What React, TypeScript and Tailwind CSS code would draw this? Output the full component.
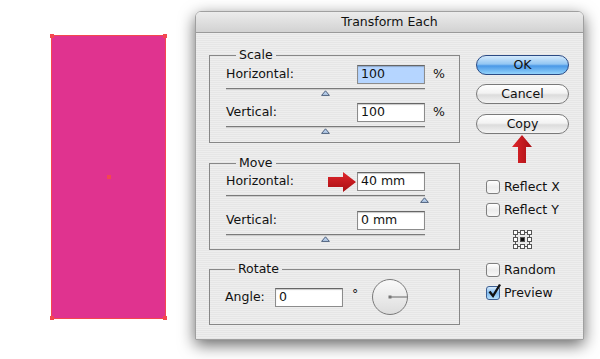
const STRIPES =
  'bg-[repeating-linear-gradient(to_bottom,#eeeeee_0px,#eeeeee_1px,#e6e6e6_1px,#e6e6e6_2px)]'
const AQUA =
  'border border-[#7a7a7a] bg-[linear-gradient(to_bottom,#ffffff_0%,#f3f3f3_45%,#dcdcdc_55%,#f4f4f4_100%)]'
const AQUA_BLUE =
  'border border-[#2b4a84] bg-[linear-gradient(to_bottom,#d3e9fc_0%,#92c6f3_45%,#4a98e7_55%,#93d3fb_100%)]'

function Field({ value, selected, w = 'w-[68px]' }: { value: string; selected?: boolean; w?: string }) {
  return (
    <div
      className={`flex h-[19px] ${w} items-center border border-[#8c8c8c] border-t-[#666] pl-[3px] shadow-[inset_0_1px_1px_rgba(0,0,0,0.22)] ${
        selected ? 'bg-[#b5d5ff]' : 'bg-white'
      }`}
    >
      {value}
    </div>
  )
}

function Slider({ end }: { end?: boolean }) {
  return (
    <div className="mt-[4px] w-[199px]">
      <div className="h-[2px] border-t border-[#7a7a7a] bg-[#cdcdcd]" />
      <div className={`flex h-[6px] ${end ? '-mr-[4px] justify-end' : 'justify-center'}`}>
        <svg width="9" height="6" viewBox="0 0 9 6">
          <path d="M4.5 0.8 L8.4 5.4 L0.6 5.4 Z" fill="#b6cdea" stroke="#4e607c" strokeWidth="1" />
        </svg>
      </div>
    </div>
  )
}

function RightArrow() {
  return (
    <svg width="28" height="20" viewBox="0 0 28 20" className="mr-[1px]">
      <defs>
        <linearGradient id="ra" x1="0" y1="0" x2="0" y2="1">
          <stop offset="0" stopColor="#e0262b" />
          <stop offset="1" stopColor="#a80f14" />
        </linearGradient>
      </defs>
      <path d="M0 5 H15 V0 L28 10 L15 20 V15 H0 Z" fill="url(#ra)" />
    </svg>
  )
}

function UpArrow() {
  return (
    <svg width="20" height="28" viewBox="0 0 20 28">
      <defs>
        <linearGradient id="ua" x1="0" y1="0" x2="1" y2="0">
          <stop offset="0" stopColor="#e0262b" />
          <stop offset="1" stopColor="#a80f14" />
        </linearGradient>
      </defs>
      <path d="M10 0 L20 12 H14 V28 H6 V12 H0 Z" fill="url(#ua)" />
    </svg>
  )
}

function Check({ label, checked }: { label: string; checked?: boolean }) {
  return (
    <div className="flex h-[16px] items-center">
      <div
        className={`relative h-[14px] w-[14px] rounded-[3px] border ${
          checked
            ? 'border-[#3d5f93] bg-[linear-gradient(to_bottom,#d8ecfd,#7fbaf0_50%,#b6e0fb)]'
            : 'border-[#7f7f7f] bg-[linear-gradient(to_bottom,#ffffff,#ececec_50%,#f7f7f7)]'
        }`}
      >
        {checked && (
          <svg width="15" height="16" viewBox="0 0 15 16" className="absolute -top-[4px] left-0">
            <path d="M2.5 8.5 L6 13 L13 1.5" fill="none" stroke="#111" strokeWidth="2.4" />
          </svg>
        )}
      </div>
      <span className="ml-[4px]">{label}</span>
    </div>
  )
}

function RefPoint() {
  const pts = [2.5, 9.5, 16.5]
  return (
    <svg width="20" height="19" viewBox="0 0 20 19">
      <path d="M2.5 2.5 H16.5 V16.5 H2.5 Z" fill="none" stroke="#555" strokeWidth="1" />
      {pts.map(y =>
        pts.map(x => (
          <rect
            key={`${x}-${y}`}
            x={x - 2}
            y={y - 2}
            width="4"
            height="4"
            fill={x === 9.5 && y === 9.5 ? '#111' : '#fff'}
            stroke="#555"
            strokeWidth="1"
          />
        ))
      )}
    </svg>
  )
}

function Dial() {
  return (
    <svg width="38" height="38" viewBox="0 0 38 38">
      <defs>
        <linearGradient id="dl" x1="0" y1="0" x2="0" y2="1">
          <stop offset="0" stopColor="#fafafa" />
          <stop offset="1" stopColor="#dcdcdc" />
        </linearGradient>
      </defs>
      <circle cx="19" cy="19" r="17.5" fill="url(#dl)" stroke="#7a7a7a" strokeWidth="1" />
      <path d="M19 19 H36" stroke="#666" strokeWidth="1" />
      <rect x="17.5" y="17.5" width="3" height="3" fill="#777" />
    </svg>
  )
}

export default function App() {
  return (
    <div className="flex h-[359px] w-[600px] items-start bg-white font-['DejaVu_Sans',sans-serif] text-[12.5px] text-[#111]">
      {/* Selected shape */}
      <div className="relative ml-[51px] mt-[35px] h-[284px] w-[115px] border border-[#f4474f] bg-[#e0338f]">
        <div className="absolute -left-[2px] -top-[2px] h-[4px] w-[4px] bg-[#f4474f]" />
        <div className="absolute -right-[2px] -top-[2px] h-[4px] w-[4px] bg-[#f4474f]" />
        <div className="absolute -bottom-[2px] -left-[2px] h-[4px] w-[4px] bg-[#f4474f]" />
        <div className="absolute -bottom-[2px] -right-[2px] h-[4px] w-[4px] bg-[#f4474f]" />
        <div className="absolute left-[55px] top-[139px] h-[4px] w-[4px] bg-[#f4474f]" />
      </div>

      {/* Dialog */}
      <div className="ml-[29px] mt-[11px] flex h-[329px] w-[389px] flex-col overflow-hidden rounded-t-[6px] border border-[#a0a0a0] shadow-[0_5px_16px_rgba(0,0,0,0.6)]">
        <div className="flex h-[21px] shrink-0 items-center justify-center border-b border-[#9a9a9a] bg-[linear-gradient(to_bottom,#ececec,#d2d2d2)]">
          Transform Each
        </div>

        <div className={`flex flex-1 px-[13px] ${STRIPES}`}>
          {/* Left column */}
          <div className="w-[251px] pt-[14px]">
            <fieldset className="border border-[#878787] pb-[8px] pl-[16px] pt-[2px]">
              <legend className="ml-[10px] px-[3px] leading-[16px]">Scale</legend>
              <div className="flex h-[19px] items-center">
                <span className="w-[131px]">Horizontal:</span>
                <Field value="100" selected />
                <span className="ml-[8px]">%</span>
              </div>
              <Slider />
              <div className="mt-[7px] flex h-[19px] items-center">
                <span className="w-[131px]">Vertical:</span>
                <Field value="100" />
                <span className="ml-[8px]">%</span>
              </div>
              <Slider />
            </fieldset>

            <fieldset className="mt-[12px] border border-[#878787] pb-[7px] pl-[16px] pt-[1px]">
              <legend className="ml-[10px] px-[3px] leading-[16px]">Move</legend>
              <div className="flex h-[19px] w-[199px] items-center">
                <span className="flex-1">Horizontal:</span>
                <RightArrow />
                <Field value="40 mm" />
              </div>
              <Slider end />
              <div className="mt-[8px] flex h-[19px] items-center">
                <span className="w-[131px]">Vertical:</span>
                <Field value="0 mm" />
              </div>
              <Slider />
            </fieldset>

            <fieldset className="mt-[11px] border border-[#878787] pb-[8px] pl-[15px] pt-[1px]">
              <legend className="ml-[10px] px-[3px] leading-[16px]">Rotate</legend>
              <div className="flex h-[38px] items-center">
                <span className="w-[50px]">Angle:</span>
                <Field value="0" />
                <span className="mb-[6px] ml-[9px]">°</span>
                <div className="ml-[13px]">
                  <Dial />
                </div>
              </div>
            </fieldset>
          </div>

          {/* Right column */}
          <div className="ml-[16px] flex w-[93px] flex-col pt-[22px]">
            <div className={`flex h-[20px] items-center justify-center rounded-full ${AQUA_BLUE}`}>OK</div>
            <div className={`mt-[9px] flex h-[20px] items-center justify-center rounded-full ${AQUA}`}>Cancel</div>
            <div className={`mt-[10px] flex h-[20px] items-center justify-center rounded-full ${AQUA}`}>Copy</div>
            <div className="mt-[1px] flex justify-center pr-[2px]">
              <UpArrow />
            </div>
            <div className="mt-[16px] pl-[10px]">
              <Check label="Reflect X" />
              <div className="mt-[7px]">
                <Check label="Reflect Y" />
              </div>
            </div>
            <div className="mt-[12px] flex justify-center">
              <RefPoint />
            </div>
            <div className="mt-[13px] pl-[10px]">
              <Check label="Random" />
              <div className="mt-[7px]">
                <Check label="Preview" checked />
              </div>
            </div>
          </div>
        </div>
      </div>
    </div>
  )
}
